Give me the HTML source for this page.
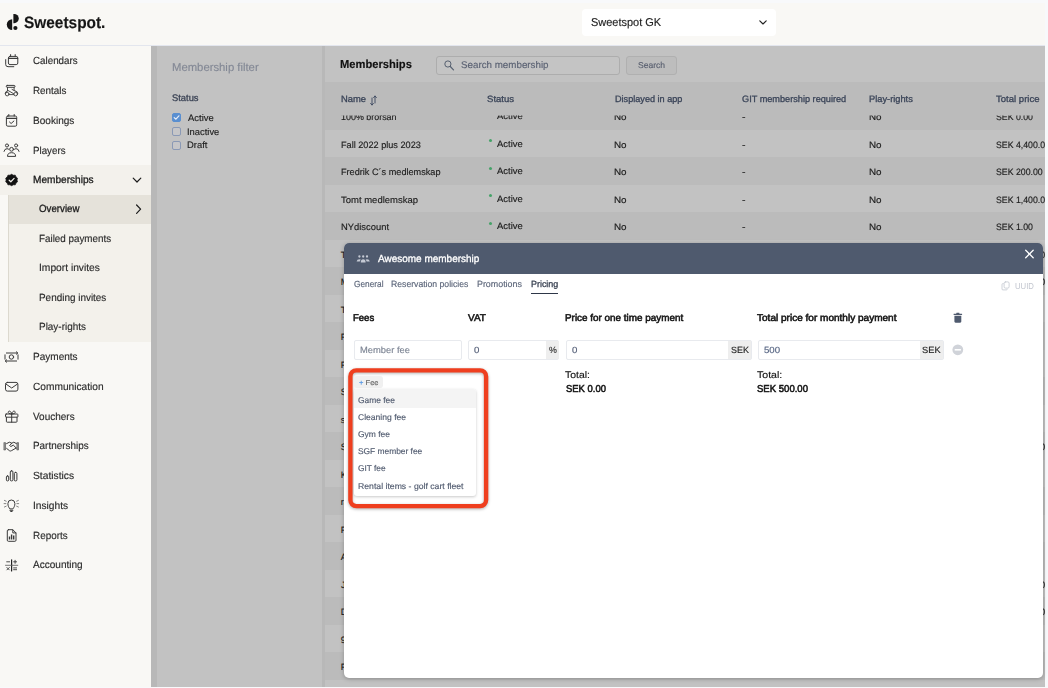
<!DOCTYPE html>
<html lang="en"><head><meta charset="utf-8"><title>Sweetspot - Memberships</title>
<style>
html,body{margin:0;padding:0;}
body{width:1048px;height:688px;overflow:hidden;position:relative;background:#f8f9fb;font-family:"Liberation Sans",sans-serif;}
.abs,.t{position:absolute;}
.t{white-space:pre;line-height:1;transform-origin:0 50%;text-rendering:geometricPrecision;-webkit-text-stroke:0.15px currentColor;}
#app{position:absolute;left:0;top:3px;width:1045px;height:684px;background:#f9f8f5;}
#root{position:absolute;left:0;top:0;width:1048px;height:688px;}
#rows{position:absolute;left:0;top:0;width:1048px;height:688px;clip-path:inset(115.5px 3px 1px 325px);}
.row{position:absolute;left:325px;width:720px;height:27.5px;}
.inp{position:absolute;box-sizing:border-box;border:1px solid #e8eaee;border-radius:2px;background:#fff;}
.addon{position:absolute;background:#eeeeee;}
.cb{position:absolute;width:9px;height:9px;box-sizing:border-box;border:1px solid #8a99b5;border-radius:2px;background:#c6c6c8;}
svg{position:absolute;overflow:visible;}
</style></head><body>
<div id="app"></div>
<div id="root">
<!-- header -->
<div class="abs" style="left:0;top:45px;width:1045px;height:1px;background:#e3e6ee"></div>
<div class="abs" style="left:582px;top:9px;width:194px;height:27px;background:#fff;border-radius:4px"></div>
<svg style="left:759.3px;top:20.2px" width="8" height="5" viewBox="0 0 8 5"><path d="M0.8 0.8 L4 4 L7.2 0.8" fill="none" stroke="#222" stroke-width="1.15" stroke-linecap="round" stroke-linejoin="round"/></svg>
<!-- logo -->
<svg style="left:5.9px;top:13.6px" width="11.6" height="16.2" viewBox="0 0 11.6 16.2"><path d="M6.2 5.2 A5.4 5.4 0 0 0 6.2 16 Z" fill="#161616"/><path d="M7.4 0 H8.2 A3.3 3.3 0 0 1 8.2 9.2 H7.4 Z" fill="#161616"/><circle cx="9.4" cy="14" r="2.1" fill="#161616"/></svg>
<!-- sidebar -->
<div class="abs" style="left:0;top:165px;width:151px;height:30px;background:#f3f1ec"></div>
<div class="abs" style="left:9px;top:195px;width:142px;height:147px;background:#f3f1eb"></div>
<div class="abs" style="left:9px;top:195px;width:142px;height:29px;background:#e5e2da"></div>
<div class="abs" style="left:8.3px;top:195px;width:1.2px;height:147px;background:#dcd9cf"></div>
<svg style="left:0;top:0" width="151" height="688" viewBox="0 0 151 688" fill="none" stroke="#3a3a3a" stroke-width="1" stroke-linecap="round" stroke-linejoin="round">
<!-- calendars -->
<rect x="8.4" y="56.4" width="9.4" height="8.2" rx="1.6"/><path d="M8.6 58.4 H17.6" stroke-width="1.3"/><path d="M10.6 54.6 V56.4 M15.2 54.6 V56.4"/><path d="M5.7 59.6 V64.4 Q5.7 66.7 8 66.7 H13.8"/>
<!-- rentals -->
<rect x="6.3" y="85.4" width="8.7" height="1.9" rx="0.9"/><path d="M7.5 87.3 V90.6 M14.1 87.3 V90.2 M8.1 90.5 L13.6 93.7 M12 89.4 L14.9 90.9 M9.2 94.6 H13.7 M5.1 93.2 Q5.6 91 7.7 90.8 M17.8 93.2 Q17.4 91.1 15.3 90.9" stroke-width="0.9"/><circle cx="7.2" cy="94.1" r="1.8" stroke-width="0.9"/><circle cx="15.7" cy="94.1" r="1.8" stroke-width="0.9"/>
<!-- bookings -->
<rect x="6.4" y="116" width="10.3" height="10.2" rx="1.4"/><path d="M6.6 118.4 H16.5" stroke-width="1.2"/><path d="M8.8 114.5 V116 M14.2 114.5 V116"/><path d="M9.5 122 L11.1 123.5 L13.9 121"/>
<!-- players -->
<circle cx="7" cy="145.5" r="1.55"/><circle cx="16.1" cy="145.5" r="1.55"/><circle cx="11.55" cy="149.3" r="1.9"/>
<path d="M4 151.4 Q4.5 148.7 7 148.7 Q8 148.7 8.6 149.2 M19.1 151.4 Q18.6 148.7 16.1 148.7 Q15.1 148.7 14.5 149.2 M7.5 156 Q7.5 152.7 11.55 152.7 Q15.6 152.7 15.6 156 Z"/>
<!-- memberships badge -->
<g transform="translate(11.6 180) scale(0.93) translate(-11.6 -180)"><path d="M11.6 173.9 L13.4 174.9 L15.5 174.8 L16.3 176.7 L17.9 178 L17.4 180 L17.9 182 L16.3 183.3 L15.5 185.2 L13.4 185.1 L11.6 186.1 L9.8 185.1 L7.7 185.2 L6.9 183.3 L5.3 182 L5.8 180 L5.3 178 L6.9 176.7 L7.7 174.8 L9.8 174.9 Z" fill="#111" stroke="#111" stroke-width="0.8"/>
<path d="M9 180.2 L10.8 181.9 L14.3 178.2" stroke="#f3f1ec" stroke-width="1.3"/></g>
<!-- chevrons -->
<path d="M133.2 178.2 L137 182 L140.8 178.2" stroke="#1b1b1b" stroke-width="1.2"/>
<path d="M136.6 205 L140.6 209.2 L136.6 213.4" stroke="#1b1b1b" stroke-width="1.2"/>
<!-- payments -->
<path d="M6.4 353 H17.4 M16.4 351.8 L17.8 353 L16.4 354.2 M18 354.8 V359.2 M16.6 361 H5.6 M6.6 359.8 L5.2 361 L6.6 362.2 M5 359.2 V354.8"/><circle cx="11.4" cy="357" r="2.2"/>
<!-- communication -->
<rect x="5.5" y="382.4" width="12.4" height="8.7" rx="1.9"/><path d="M5.9 384 L11.7 388 L17.5 384"/>
<!-- vouchers -->
<rect x="5.5" y="414" width="12.4" height="3.2" rx="0.7"/><path d="M6.4 417.2 V421.4 Q6.4 422.2 7.2 422.2 H16.2 Q17 422.2 17 421.4 V417.2 M11.7 414 V422.2"/>
<path d="M11.7 414 C9 414 7.8 412.9 8.3 411.8 C9 410.4 11 411 11.7 414 C12.4 411 14.4 410.4 15.1 411.8 C15.6 412.9 14.4 414 11.7 414"/>
<!-- partnerships -->
<rect x="4.2" y="442.6" width="1.3" height="7.4" fill="#777" stroke="#555" stroke-width="0.6"/><rect x="17.2" y="442.6" width="1.3" height="7.4" fill="#777" stroke="#555" stroke-width="0.6"/>
<path d="M6.6 443.6 L9.4 442.2 L11.8 443.2 L9.6 445.6 Q10.6 447 12 446 L13.2 445 L16.2 448 M6.6 448.4 L9.6 450.8 Q10.6 451.3 11.6 450.6 L16.2 448 M11.8 443.2 L13.8 442.2 L16.4 443.6"/>
<!-- statistics -->
<rect x="6.4" y="475.9" width="2.3" height="5" rx="1"/><rect x="10.3" y="470.8" width="2.6" height="10.1" rx="1.1"/><rect x="14.3" y="472.4" width="2.6" height="8.5" rx="1.1"/>
<!-- insights -->
<path d="M9.7 508.6 C8.8 507.4 7.9 505.9 7.9 503.6 A3.5 3.6 0 0 1 14.9 503.6 C14.9 505.9 14 507.4 13.1 508.6 Z M9.9 510.3 H12.9 M10.7 511.5 H12.1"/>
<path d="M4.4 500.4 L6.2 501.2 M4.1 503.6 H5.9 M4.4 507 L6.2 506.2 M18.4 500.4 L16.6 501.2 M18.7 503.6 H16.9 M18.4 507 L16.6 506.2" stroke-width="0.8" stroke="#666"/>
<!-- reports -->
<path d="M8.4 529.7 H12.8 L16 532.9 V540.2 Q16 541.3 14.9 541.3 H8.4 Q7.3 541.3 7.3 540.2 V530.8 Q7.3 529.7 8.4 529.7 Z M12.8 529.9 V532.9 H15.8"/>
<path d="M9.5 539.6 V536.6 M11.6 539.6 V534.4 M13.7 539.6 V535.6" stroke-width="1.4" stroke-linecap="butt"/>
<!-- accounting -->
<path d="M11.6 559.8 V571" stroke-width="1.2" stroke="#222"/><path d="M5.5 565.3 H17.8" stroke-width="0.9" stroke="#666"/>
<path d="M6.7 561.8 H9.6 M13.6 561.8 H16.6 M15.1 560.3 V563.3 M6.9 567.5 L9.3 569.9 M9.3 567.5 L6.9 569.9 M13.6 567.9 H16.6 M13.6 569.7 H16.6" stroke-width="0.9"/>
</svg>
<!-- gray area -->
<div class="abs" style="left:151px;top:46px;width:894px;height:641px;background:#b8b8b8"></div>
<div class="abs" style="left:157px;top:46px;width:165px;height:641px;background:#c2c2c2"></div>
<div class="abs" style="left:325px;top:46px;width:720px;height:641px;background:#c2c2c2"></div>
<div class="abs" style="left:325px;top:82px;width:720px;height:31px;background:#bbbbbb"></div>
<div class="row" style="top:102px;height:28px;background:#bbbbbb"></div>
<div class="row" style="top:157px;height:28px;background:#bbbbbb"></div>
<div class="row" style="top:212px;height:28px;background:#bbbbbb"></div>
<div class="row" style="top:267px;height:28px;background:#bbbbbb"></div>
<div class="row" style="top:322px;height:28px;background:#bbbbbb"></div>
<div class="row" style="top:377px;height:28px;background:#bbbbbb"></div>
<div class="row" style="top:432px;height:28px;background:#bbbbbb"></div>
<div class="row" style="top:487px;height:28px;background:#bbbbbb"></div>
<div class="row" style="top:542px;height:28px;background:#bbbbbb"></div>
<div class="row" style="top:597px;height:28px;background:#bbbbbb"></div>
<div class="row" style="top:652px;height:28px;background:#bbbbbb"></div>
<!-- filter -->
<div class="cb" style="left:172px;top:113px;background:#5a8fd0;border-color:#5a8fd0"></div>
<svg style="left:172px;top:113px" width="9" height="9" viewBox="0 0 9 9"><path d="M2.2 4.6 L3.9 6.2 L6.9 2.8" fill="none" stroke="#e8eef8" stroke-width="1.2" stroke-linecap="round" stroke-linejoin="round"/></svg>
<div class="cb" style="left:172px;top:126.7px"></div>
<div class="cb" style="left:172px;top:140.5px"></div>
<!-- search -->
<div class="abs" style="left:436px;top:56px;width:184px;height:18.5px;box-sizing:border-box;border:1px solid #adadad;border-radius:3px;background:#c4c4c4"></div>
<svg style="left:444px;top:60px" width="11" height="11" viewBox="0 0 11 11"><circle cx="3.9" cy="4" r="3.1" fill="none" stroke="#566070" stroke-width="1"/><path d="M6.3 6.5 L9.5 9.8" stroke="#566070" stroke-width="1.2" stroke-linecap="round"/></svg>
<div class="abs" style="left:626px;top:56px;width:51px;height:18.5px;box-sizing:border-box;border:1px solid #b0b0b0;border-radius:3px;background:#bdbdbd"></div>
<svg style="left:370px;top:95px" width="7" height="11" viewBox="0 0 7 11"><path d="M2 10 V3 M0.6 8.4 L2 10 L3.4 8.4 M5 1 V8 M3.6 2.6 L5 1 L6.4 2.6" fill="none" stroke="#3a465e" stroke-width="0.9" stroke-linecap="round" stroke-linejoin="round"/></svg>
<span class="t" style="left:33.29px;top:57.00px;font-size:10.4px;color:#2b2b2b;transform:scaleX(0.9424);">Calendars</span>
<span class="t" style="left:33.18px;top:87.00px;font-size:10.4px;color:#2b2b2b;transform:scaleX(0.9492);">Rentals</span>
<span class="t" style="left:33.18px;top:117.00px;font-size:10.4px;color:#2b2b2b;transform:scaleX(0.9671);">Bookings</span>
<span class="t" style="left:33.18px;top:147.00px;font-size:10.4px;color:#2b2b2b;transform:scaleX(0.9391);">Players</span>
<span class="t" style="left:33.18px;top:176.00px;font-size:10.4px;color:#1b1b1b;transform:scaleX(0.9722);-webkit-text-stroke:0.3px currentColor;">Memberships</span>
<span class="t" style="left:39.39px;top:205.00px;font-size:10.4px;color:#1b1b1b;transform:scaleX(0.9338);-webkit-text-stroke:0.3px currentColor;">Overview</span>
<span class="t" style="left:39.28px;top:235.00px;font-size:10.4px;color:#2b2b2b;transform:scaleX(0.9462);">Failed payments</span>
<span class="t" style="left:39.28px;top:264.00px;font-size:10.4px;color:#2b2b2b;transform:scaleX(0.9862);">Import invites</span>
<span class="t" style="left:39.28px;top:294.00px;font-size:10.4px;color:#2b2b2b;transform:scaleX(0.9554);">Pending invites</span>
<span class="t" style="left:39.28px;top:323.00px;font-size:10.4px;color:#2b2b2b;transform:scaleX(0.9562);">Play-rights</span>
<span class="t" style="left:33.18px;top:353.00px;font-size:10.4px;color:#2b2b2b;transform:scaleX(0.9663);">Payments</span>
<span class="t" style="left:33.29px;top:383.00px;font-size:10.4px;color:#2b2b2b;transform:scaleX(0.9786);">Communication</span>
<span class="t" style="left:33.29px;top:413.00px;font-size:10.4px;color:#2b2b2b;transform:scaleX(0.9611);">Vouchers</span>
<span class="t" style="left:33.18px;top:442.00px;font-size:10.4px;color:#2b2b2b;transform:scaleX(0.9537);">Partnerships</span>
<span class="t" style="left:33.29px;top:472.00px;font-size:10.4px;color:#2b2b2b;transform:scaleX(0.9896);">Statistics</span>
<span class="t" style="left:33.18px;top:502.00px;font-size:10.4px;color:#2b2b2b;transform:scaleX(0.9813);">Insights</span>
<span class="t" style="left:33.18px;top:532.00px;font-size:10.4px;color:#2b2b2b;transform:scaleX(0.9520);">Reports</span>
<span class="t" style="left:33.29px;top:561.00px;font-size:10.4px;color:#2b2b2b;transform:scaleX(0.9654);">Accounting</span>
<span class="t" style="left:23.91px;top:15.00px;font-size:16.4px;font-weight:700;color:#161616;transform:scaleX(0.9407);">Sweetspot.</span>
<span class="t" style="left:591.06px;top:18.00px;font-size:11.4px;color:#222;transform:scaleX(0.9621);">Sweetspot GK</span>
<span class="t" style="left:172.14px;top:63.00px;font-size:11.4px;color:#838895;transform:scaleX(0.9919);">Membership filter</span>
<span class="t" style="left:172.31px;top:94.00px;font-size:9.5px;color:#3a4254;transform:scaleX(0.9854);-webkit-text-stroke:0.3px currentColor;">Status</span>
<span class="t" style="left:187.52px;top:114.00px;font-size:9.3px;color:#1f1f1f;transform:scaleX(1.0156);">Active</span>
<span class="t" style="left:187.43px;top:128.00px;font-size:9.3px;color:#1f1f1f;transform:scaleX(1.0086);">Inactive</span>
<span class="t" style="left:187.43px;top:141.00px;font-size:9.3px;color:#1f1f1f;transform:scaleX(1.0132);">Draft</span>
<span class="t" style="left:340.44px;top:59.00px;font-size:11.6px;font-weight:700;color:#111;transform:scaleX(0.9616);">Memberships</span>
<span class="t" style="left:461.31px;top:61.00px;font-size:9.6px;color:#5c6374;transform:scaleX(1.0198);">Search membership</span>
<span class="t" style="left:637.75px;top:61.00px;font-size:8.5px;color:#5a6070;transform:scaleX(1.0036);">Search</span>
<span class="t" style="left:340.53px;top:95.00px;font-size:9.2px;color:#3a4458;transform:scaleX(1.0202);-webkit-text-stroke:0.3px currentColor;">Name</span>
<span class="t" style="left:487.22px;top:95.00px;font-size:9.2px;color:#3a4458;transform:scaleX(1.0409);-webkit-text-stroke:0.3px currentColor;">Status</span>
<span class="t" style="left:614.53px;top:95.00px;font-size:9.2px;color:#3a4458;transform:scaleX(0.9923);-webkit-text-stroke:0.3px currentColor;">Displayed in app</span>
<span class="t" style="left:741.52px;top:95.00px;font-size:9.2px;color:#3a4458;transform:scaleX(0.9971);-webkit-text-stroke:0.3px currentColor;">GIT membership required</span>
<span class="t" style="left:868.53px;top:95.00px;font-size:9.2px;color:#3a4458;transform:scaleX(1.0093);-webkit-text-stroke:0.3px currentColor;">Play-rights</span>
<span class="t" style="left:996.12px;top:95.00px;font-size:9.2px;color:#3a4458;transform:scaleX(1.0391);-webkit-text-stroke:0.3px currentColor;">Total price</span>
</div>
<div id="rows">
<div class="abs" style="left:489px;top:112px;width:3px;height:3px;border-radius:50%;background:#45a268"></div>
<div class="abs" style="left:489px;top:139px;width:3px;height:3px;border-radius:50%;background:#45a268"></div>
<div class="abs" style="left:489px;top:167px;width:3px;height:3px;border-radius:50%;background:#45a268"></div>
<div class="abs" style="left:489px;top:194px;width:3px;height:3px;border-radius:50%;background:#45a268"></div>
<div class="abs" style="left:489px;top:222px;width:3px;height:3px;border-radius:50%;background:#45a268"></div>
<div class="abs" style="left:489px;top:249px;width:3px;height:3px;border-radius:50%;background:#45a268"></div>
<div class="abs" style="left:489px;top:277px;width:3px;height:3px;border-radius:50%;background:#45a268"></div>
<div class="abs" style="left:489px;top:304px;width:3px;height:3px;border-radius:50%;background:#45a268"></div>
<div class="abs" style="left:489px;top:332px;width:3px;height:3px;border-radius:50%;background:#45a268"></div>
<div class="abs" style="left:489px;top:359px;width:3px;height:3px;border-radius:50%;background:#45a268"></div>
<div class="abs" style="left:489px;top:387px;width:3px;height:3px;border-radius:50%;background:#45a268"></div>
<div class="abs" style="left:489px;top:414px;width:3px;height:3px;border-radius:50%;background:#45a268"></div>
<div class="abs" style="left:489px;top:442px;width:3px;height:3px;border-radius:50%;background:#45a268"></div>
<div class="abs" style="left:489px;top:469px;width:3px;height:3px;border-radius:50%;background:#45a268"></div>
<div class="abs" style="left:489px;top:497px;width:3px;height:3px;border-radius:50%;background:#45a268"></div>
<div class="abs" style="left:489px;top:524px;width:3px;height:3px;border-radius:50%;background:#45a268"></div>
<div class="abs" style="left:489px;top:552px;width:3px;height:3px;border-radius:50%;background:#45a268"></div>
<div class="abs" style="left:489px;top:579px;width:3px;height:3px;border-radius:50%;background:#45a268"></div>
<div class="abs" style="left:489px;top:607px;width:3px;height:3px;border-radius:50%;background:#45a268"></div>
<div class="abs" style="left:489px;top:634px;width:3px;height:3px;border-radius:50%;background:#45a268"></div>
<div class="abs" style="left:489px;top:662px;width:3px;height:3px;border-radius:50%;background:#45a268"></div>
<span class="t" style="left:340.72px;top:113.00px;font-size:9.2px;color:#1c1c1c;transform:scaleX(0.9704);">100% brorsan</span>
<span class="t" style="left:496.62px;top:112.00px;font-size:9.2px;color:#1c1c1c;transform:scaleX(1.0272);">Active</span>
<span class="t" style="left:614.23px;top:113.00px;font-size:9.2px;color:#1c1c1c;transform:scaleX(1.0734);">No</span>
<span class="t" style="left:741.80px;top:113.00px;font-size:9.2px;color:#1c1c1c;transform:scaleX(1.1468);">-</span>
<span class="t" style="left:868.53px;top:113.00px;font-size:9.2px;color:#1c1c1c;transform:scaleX(1.0734);">No</span>
<span class="t" style="left:996.12px;top:113.00px;font-size:9.2px;color:#1c1c1c;transform:scaleX(0.952);">SEK 0.00</span>
<span class="t" style="left:340.63px;top:141.00px;font-size:9.2px;color:#1c1c1c;transform:scaleX(0.9951);">Fall 2022 plus 2023</span>
<span class="t" style="left:496.62px;top:140.00px;font-size:9.2px;color:#1c1c1c;transform:scaleX(1.0272);">Active</span>
<span class="t" style="left:614.23px;top:141.00px;font-size:9.2px;color:#1c1c1c;transform:scaleX(1.0734);">No</span>
<span class="t" style="left:741.80px;top:141.00px;font-size:9.2px;color:#1c1c1c;transform:scaleX(1.1468);">-</span>
<span class="t" style="left:868.53px;top:141.00px;font-size:9.2px;color:#1c1c1c;transform:scaleX(1.0734);">No</span>
<span class="t" style="left:996.12px;top:141.00px;font-size:9.2px;color:#1c1c1c;transform:scaleX(0.952);">SEK 4,400.00</span>
<span class="t" style="left:340.63px;top:168.00px;font-size:9.2px;color:#1c1c1c;transform:scaleX(0.9945);">Fredrik C´s medlemskap</span>
<span class="t" style="left:496.62px;top:167.00px;font-size:9.2px;color:#1c1c1c;transform:scaleX(1.0272);">Active</span>
<span class="t" style="left:614.23px;top:168.00px;font-size:9.2px;color:#1c1c1c;transform:scaleX(1.0734);">No</span>
<span class="t" style="left:741.80px;top:168.00px;font-size:9.2px;color:#1c1c1c;transform:scaleX(1.1468);">-</span>
<span class="t" style="left:868.53px;top:168.00px;font-size:9.2px;color:#1c1c1c;transform:scaleX(1.0734);">No</span>
<span class="t" style="left:996.12px;top:168.00px;font-size:9.2px;color:#1c1c1c;transform:scaleX(0.952);">SEK 200.00</span>
<span class="t" style="left:340.72px;top:196.00px;font-size:9.2px;color:#1c1c1c;transform:scaleX(1.0331);">Tomt medlemskap</span>
<span class="t" style="left:496.62px;top:195.00px;font-size:9.2px;color:#1c1c1c;transform:scaleX(1.0272);">Active</span>
<span class="t" style="left:614.23px;top:196.00px;font-size:9.2px;color:#1c1c1c;transform:scaleX(1.0734);">No</span>
<span class="t" style="left:741.80px;top:196.00px;font-size:9.2px;color:#1c1c1c;transform:scaleX(1.1468);">-</span>
<span class="t" style="left:868.53px;top:196.00px;font-size:9.2px;color:#1c1c1c;transform:scaleX(1.0734);">No</span>
<span class="t" style="left:996.12px;top:196.00px;font-size:9.2px;color:#1c1c1c;transform:scaleX(0.952);">SEK 1,400.00</span>
<span class="t" style="left:340.63px;top:223.00px;font-size:9.2px;color:#1c1c1c;transform:scaleX(1.0219);">NYdiscount</span>
<span class="t" style="left:496.62px;top:222.00px;font-size:9.2px;color:#1c1c1c;transform:scaleX(1.0272);">Active</span>
<span class="t" style="left:614.23px;top:223.00px;font-size:9.2px;color:#1c1c1c;transform:scaleX(1.0734);">No</span>
<span class="t" style="left:741.80px;top:223.00px;font-size:9.2px;color:#1c1c1c;transform:scaleX(1.1468);">-</span>
<span class="t" style="left:868.53px;top:223.00px;font-size:9.2px;color:#1c1c1c;transform:scaleX(1.0734);">No</span>
<span class="t" style="left:996.12px;top:223.00px;font-size:9.2px;color:#1c1c1c;transform:scaleX(0.952);">SEK 1.00</span>
<span class="t" style="left:340.72px;top:251.00px;font-size:9.2px;color:#1c1c1c;">Test membership</span>
<span class="t" style="left:496.62px;top:250.00px;font-size:9.2px;color:#1c1c1c;transform:scaleX(1.0272);">Active</span>
<span class="t" style="left:614.23px;top:251.00px;font-size:9.2px;color:#1c1c1c;transform:scaleX(1.0734);">No</span>
<span class="t" style="left:741.80px;top:251.00px;font-size:9.2px;color:#1c1c1c;transform:scaleX(1.1468);">-</span>
<span class="t" style="left:868.53px;top:251.00px;font-size:9.2px;color:#1c1c1c;transform:scaleX(1.0734);">No</span>
<span class="t" style="left:996.12px;top:251.00px;font-size:9.2px;color:#1c1c1c;transform:scaleX(0.952);">SEK 5,000.00</span>
<span class="t" style="left:340.63px;top:278.00px;font-size:9.2px;color:#1c1c1c;">Medlemskap 2023</span>
<span class="t" style="left:496.62px;top:277.00px;font-size:9.2px;color:#1c1c1c;transform:scaleX(1.0272);">Active</span>
<span class="t" style="left:614.23px;top:278.00px;font-size:9.2px;color:#1c1c1c;transform:scaleX(1.0734);">No</span>
<span class="t" style="left:741.80px;top:278.00px;font-size:9.2px;color:#1c1c1c;transform:scaleX(1.1468);">-</span>
<span class="t" style="left:868.53px;top:278.00px;font-size:9.2px;color:#1c1c1c;transform:scaleX(1.0734);">No</span>
<span class="t" style="left:996.12px;top:278.00px;font-size:9.2px;color:#1c1c1c;transform:scaleX(0.952);">SEK 2,500.00</span>
<span class="t" style="left:340.72px;top:306.00px;font-size:9.2px;color:#1c1c1c;">Test junior</span>
<span class="t" style="left:496.62px;top:305.00px;font-size:9.2px;color:#1c1c1c;transform:scaleX(1.0272);">Active</span>
<span class="t" style="left:614.23px;top:306.00px;font-size:9.2px;color:#1c1c1c;transform:scaleX(1.0734);">No</span>
<span class="t" style="left:741.80px;top:306.00px;font-size:9.2px;color:#1c1c1c;transform:scaleX(1.1468);">-</span>
<span class="t" style="left:868.53px;top:306.00px;font-size:9.2px;color:#1c1c1c;transform:scaleX(1.0734);">No</span>
<span class="t" style="left:996.12px;top:306.00px;font-size:9.2px;color:#1c1c1c;transform:scaleX(0.952);">SEK 0.00</span>
<span class="t" style="left:340.63px;top:333.00px;font-size:9.2px;color:#1c1c1c;">Fullvärdig medlem</span>
<span class="t" style="left:496.62px;top:332.00px;font-size:9.2px;color:#1c1c1c;transform:scaleX(1.0272);">Active</span>
<span class="t" style="left:614.23px;top:333.00px;font-size:9.2px;color:#1c1c1c;transform:scaleX(1.0734);">No</span>
<span class="t" style="left:741.80px;top:333.00px;font-size:9.2px;color:#1c1c1c;transform:scaleX(1.1468);">-</span>
<span class="t" style="left:868.53px;top:333.00px;font-size:9.2px;color:#1c1c1c;transform:scaleX(1.0734);">No</span>
<span class="t" style="left:996.12px;top:333.00px;font-size:9.2px;color:#1c1c1c;transform:scaleX(0.952);">SEK 650.00</span>
<span class="t" style="left:340.63px;top:361.00px;font-size:9.2px;color:#1c1c1c;">Familjemedlemskap</span>
<span class="t" style="left:496.62px;top:360.00px;font-size:9.2px;color:#1c1c1c;transform:scaleX(1.0272);">Active</span>
<span class="t" style="left:614.23px;top:361.00px;font-size:9.2px;color:#1c1c1c;transform:scaleX(1.0734);">No</span>
<span class="t" style="left:741.80px;top:361.00px;font-size:9.2px;color:#1c1c1c;transform:scaleX(1.1468);">-</span>
<span class="t" style="left:868.53px;top:361.00px;font-size:9.2px;color:#1c1c1c;transform:scaleX(1.0734);">No</span>
<span class="t" style="left:996.12px;top:361.00px;font-size:9.2px;color:#1c1c1c;transform:scaleX(0.952);">SEK 90.00</span>
<span class="t" style="left:340.72px;top:388.00px;font-size:9.2px;color:#1c1c1c;">Senior 2023</span>
<span class="t" style="left:496.62px;top:387.00px;font-size:9.2px;color:#1c1c1c;transform:scaleX(1.0272);">Active</span>
<span class="t" style="left:614.23px;top:388.00px;font-size:9.2px;color:#1c1c1c;transform:scaleX(1.0734);">No</span>
<span class="t" style="left:741.80px;top:388.00px;font-size:9.2px;color:#1c1c1c;transform:scaleX(1.1468);">-</span>
<span class="t" style="left:868.53px;top:388.00px;font-size:9.2px;color:#1c1c1c;transform:scaleX(1.0734);">No</span>
<span class="t" style="left:996.12px;top:388.00px;font-size:9.2px;color:#1c1c1c;transform:scaleX(0.952);">SEK 300.00</span>
<span class="t" style="left:340.72px;top:416.00px;font-size:9.2px;color:#1c1c1c;">student</span>
<span class="t" style="left:496.62px;top:415.00px;font-size:9.2px;color:#1c1c1c;transform:scaleX(1.0272);">Active</span>
<span class="t" style="left:614.23px;top:416.00px;font-size:9.2px;color:#1c1c1c;transform:scaleX(1.0734);">No</span>
<span class="t" style="left:741.80px;top:416.00px;font-size:9.2px;color:#1c1c1c;transform:scaleX(1.1468);">-</span>
<span class="t" style="left:868.53px;top:416.00px;font-size:9.2px;color:#1c1c1c;transform:scaleX(1.0734);">No</span>
<span class="t" style="left:996.12px;top:416.00px;font-size:9.2px;color:#1c1c1c;transform:scaleX(0.952);">SEK 150.00</span>
<span class="t" style="left:340.72px;top:443.00px;font-size:9.2px;color:#1c1c1c;">Sommarmedlem</span>
<span class="t" style="left:496.62px;top:442.00px;font-size:9.2px;color:#1c1c1c;transform:scaleX(1.0272);">Active</span>
<span class="t" style="left:614.23px;top:443.00px;font-size:9.2px;color:#1c1c1c;transform:scaleX(1.0734);">No</span>
<span class="t" style="left:741.80px;top:443.00px;font-size:9.2px;color:#1c1c1c;transform:scaleX(1.1468);">-</span>
<span class="t" style="left:868.53px;top:443.00px;font-size:9.2px;color:#1c1c1c;transform:scaleX(1.0734);">No</span>
<span class="t" style="left:996.12px;top:443.00px;font-size:9.2px;color:#1c1c1c;transform:scaleX(0.952);">SEK 2,000.00</span>
<span class="t" style="left:340.63px;top:471.00px;font-size:9.2px;color:#1c1c1c;">Kvällsmedlem</span>
<span class="t" style="left:496.62px;top:470.00px;font-size:9.2px;color:#1c1c1c;transform:scaleX(1.0272);">Active</span>
<span class="t" style="left:614.23px;top:471.00px;font-size:9.2px;color:#1c1c1c;transform:scaleX(1.0734);">No</span>
<span class="t" style="left:741.80px;top:471.00px;font-size:9.2px;color:#1c1c1c;transform:scaleX(1.1468);">-</span>
<span class="t" style="left:868.53px;top:471.00px;font-size:9.2px;color:#1c1c1c;transform:scaleX(1.0734);">No</span>
<span class="t" style="left:996.12px;top:471.00px;font-size:9.2px;color:#1c1c1c;transform:scaleX(0.952);">SEK 250.00</span>
<span class="t" style="left:340.63px;top:498.00px;font-size:9.2px;color:#1c1c1c;">range membership</span>
<span class="t" style="left:496.62px;top:497.00px;font-size:9.2px;color:#1c1c1c;transform:scaleX(1.0272);">Active</span>
<span class="t" style="left:614.23px;top:498.00px;font-size:9.2px;color:#1c1c1c;transform:scaleX(1.0734);">No</span>
<span class="t" style="left:741.80px;top:498.00px;font-size:9.2px;color:#1c1c1c;transform:scaleX(1.1468);">-</span>
<span class="t" style="left:868.53px;top:498.00px;font-size:9.2px;color:#1c1c1c;transform:scaleX(1.0734);">No</span>
<span class="t" style="left:996.12px;top:498.00px;font-size:9.2px;color:#1c1c1c;transform:scaleX(0.952);">SEK 900.00</span>
<span class="t" style="left:340.63px;top:526.00px;font-size:9.2px;color:#1c1c1c;">Företagsmedlem</span>
<span class="t" style="left:496.62px;top:525.00px;font-size:9.2px;color:#1c1c1c;transform:scaleX(1.0272);">Active</span>
<span class="t" style="left:614.23px;top:526.00px;font-size:9.2px;color:#1c1c1c;transform:scaleX(1.0734);">No</span>
<span class="t" style="left:741.80px;top:526.00px;font-size:9.2px;color:#1c1c1c;transform:scaleX(1.1468);">-</span>
<span class="t" style="left:868.53px;top:526.00px;font-size:9.2px;color:#1c1c1c;transform:scaleX(1.0734);">No</span>
<span class="t" style="left:996.12px;top:526.00px;font-size:9.2px;color:#1c1c1c;transform:scaleX(0.952);">SEK 100.00</span>
<span class="t" style="left:340.72px;top:553.00px;font-size:9.2px;color:#1c1c1c;">Autogiro test</span>
<span class="t" style="left:496.62px;top:552.00px;font-size:9.2px;color:#1c1c1c;transform:scaleX(1.0272);">Active</span>
<span class="t" style="left:614.23px;top:553.00px;font-size:9.2px;color:#1c1c1c;transform:scaleX(1.0734);">No</span>
<span class="t" style="left:741.80px;top:553.00px;font-size:9.2px;color:#1c1c1c;transform:scaleX(1.1468);">-</span>
<span class="t" style="left:868.53px;top:553.00px;font-size:9.2px;color:#1c1c1c;transform:scaleX(1.0734);">No</span>
<span class="t" style="left:996.12px;top:553.00px;font-size:9.2px;color:#1c1c1c;transform:scaleX(0.952);">SEK 10.00</span>
<span class="t" style="left:341.00px;top:581.00px;font-size:9.2px;color:#1c1c1c;">Junior 2024</span>
<span class="t" style="left:496.62px;top:580.00px;font-size:9.2px;color:#1c1c1c;transform:scaleX(1.0272);">Active</span>
<span class="t" style="left:614.23px;top:581.00px;font-size:9.2px;color:#1c1c1c;transform:scaleX(1.0734);">No</span>
<span class="t" style="left:741.80px;top:581.00px;font-size:9.2px;color:#1c1c1c;transform:scaleX(1.1468);">-</span>
<span class="t" style="left:868.53px;top:581.00px;font-size:9.2px;color:#1c1c1c;transform:scaleX(1.0734);">No</span>
<span class="t" style="left:996.12px;top:581.00px;font-size:9.2px;color:#1c1c1c;transform:scaleX(0.952);">SEK 1,200.00</span>
<span class="t" style="left:340.63px;top:608.00px;font-size:9.2px;color:#1c1c1c;">Distansmedlem</span>
<span class="t" style="left:496.62px;top:607.00px;font-size:9.2px;color:#1c1c1c;transform:scaleX(1.0272);">Active</span>
<span class="t" style="left:614.23px;top:608.00px;font-size:9.2px;color:#1c1c1c;transform:scaleX(1.0734);">No</span>
<span class="t" style="left:741.80px;top:608.00px;font-size:9.2px;color:#1c1c1c;transform:scaleX(1.1468);">-</span>
<span class="t" style="left:868.53px;top:608.00px;font-size:9.2px;color:#1c1c1c;transform:scaleX(1.0734);">No</span>
<span class="t" style="left:996.12px;top:608.00px;font-size:9.2px;color:#1c1c1c;transform:scaleX(0.952);">SEK 3,500.00</span>
<span class="t" style="left:340.72px;top:636.00px;font-size:9.2px;color:#1c1c1c;">9-hålsmedlem</span>
<span class="t" style="left:496.62px;top:635.00px;font-size:9.2px;color:#1c1c1c;transform:scaleX(1.0272);">Active</span>
<span class="t" style="left:614.23px;top:636.00px;font-size:9.2px;color:#1c1c1c;transform:scaleX(1.0734);">No</span>
<span class="t" style="left:741.80px;top:636.00px;font-size:9.2px;color:#1c1c1c;transform:scaleX(1.1468);">-</span>
<span class="t" style="left:868.53px;top:636.00px;font-size:9.2px;color:#1c1c1c;transform:scaleX(1.0734);">No</span>
<span class="t" style="left:996.12px;top:636.00px;font-size:9.2px;color:#1c1c1c;transform:scaleX(0.952);">SEK 350.00</span>
<span class="t" style="left:340.63px;top:663.00px;font-size:9.2px;color:#1c1c1c;">Fullt medlemskap</span>
<span class="t" style="left:496.62px;top:662.00px;font-size:9.2px;color:#1c1c1c;transform:scaleX(1.0272);">Active</span>
<span class="t" style="left:614.23px;top:663.00px;font-size:9.2px;color:#1c1c1c;transform:scaleX(1.0734);">No</span>
<span class="t" style="left:741.80px;top:663.00px;font-size:9.2px;color:#1c1c1c;transform:scaleX(1.1468);">-</span>
<span class="t" style="left:868.53px;top:663.00px;font-size:9.2px;color:#1c1c1c;transform:scaleX(1.0734);">No</span>
<span class="t" style="left:996.12px;top:663.00px;font-size:9.2px;color:#1c1c1c;transform:scaleX(0.952);">SEK 700.00</span>
</div>
<div id="root2" style="position:absolute;left:0;top:0;width:1048px;height:688px">
<!-- modal -->
<div class="abs" style="left:344px;top:243px;width:699px;height:435px;background:#fff;border-radius:5px;box-shadow:0 1px 4px rgba(0,0,0,.25)"></div>
<div class="abs" style="left:344px;top:243px;width:699px;height:31px;background:#4f5a6e;border-radius:5px 5px 0 0"></div>
<div class="abs" style="left:531px;top:292.8px;width:27px;height:1.5px;background:#2e3748"></div>
<!-- inputs -->
<div class="inp" style="left:353.7px;top:340px;width:108px;height:19.6px"></div>
<div class="inp" style="left:467.7px;top:340px;width:91.8px;height:19.6px"></div>
<div class="addon" style="left:546px;top:341px;width:12.5px;height:17.6px"></div>
<div class="inp" style="left:565.5px;top:340px;width:186.5px;height:19.6px"></div>
<div class="addon" style="left:727.8px;top:341px;width:23.2px;height:17.6px"></div>
<div class="inp" style="left:757.6px;top:340px;width:186.1px;height:19.6px"></div>
<div class="addon" style="left:919.5px;top:341px;width:23.2px;height:17.6px"></div>
<!-- red box -->
<svg style="left:0;top:0;filter:drop-shadow(0 1px 1.5px rgba(0,0,0,.3))" width="1048" height="688" viewBox="0 0 1048 688"><rect x="350.4" y="370.4" width="135.7" height="135.7" rx="6" fill="none" stroke="#ef3f1f" stroke-width="4.4"/></svg>
<div class="abs" style="left:354px;top:376.2px;width:29px;height:11.7px;background:#f0f0f0;border-radius:3px"></div>
<div class="abs" style="left:353.5px;top:389px;width:122.5px;height:107px;background:#fff;border-radius:3px;box-shadow:0 1px 3px rgba(0,0,0,.22)"></div>
<div class="abs" style="left:353.5px;top:389px;width:122.5px;height:19px;background:#f4f4f4;border-radius:3px 3px 0 0"></div>
<svg style="left:0;top:0" width="1048" height="688" viewBox="0 0 1048 688" fill="none" stroke-linecap="round" stroke-linejoin="round">
<g fill="#c5cad4" stroke="none"><circle cx="359.4" cy="256.5" r="1.15"/><circle cx="363.2" cy="256.5" r="1.15"/><circle cx="367" cy="256.5" r="1.15"/>
<path d="M360.8 262.6 Q360.8 259.3 363.2 259.3 Q365.6 259.3 365.6 262.6 Z"/>
<path d="M356.6 261.6 Q357 259.3 359.4 259.3 Q360.3 259.3 360.9 259.8 Q359.9 260.5 359.8 261.6 Z"/>
<path d="M369.8 261.6 Q369.4 259.3 367 259.3 Q366.1 259.3 365.5 259.8 Q366.5 260.5 366.6 261.6 Z"/></g>
<path d="M1025.7 250.3 L1033.2 257.7 M1033.2 250.3 L1025.7 257.7" stroke="#fff" stroke-width="1.3"/>
<rect x="1004.1" y="281.9" width="5" height="6.2" rx="1.3" stroke="#c2c6cf" stroke-width="0.8"/>
<path d="M1003.2 283.6 H1002.9 Q1002 283.6 1002 284.5 V289 Q1002 289.9 1002.9 289.9 H1006.4 Q1007.3 289.9 1007.3 289.2" stroke="#c2c6cf" stroke-width="0.8"/>
<g fill="#4f5a6e" stroke="none"><rect x="953.6" y="313.8" width="8.5" height="1.3" rx="0.3"/><rect x="956.3" y="312.8" width="3.1" height="1.4" rx="0.3"/>
<path d="M954.4 315.8 H961.3 V321.6 Q961.3 322.7 960.2 322.7 H955.5 Q954.4 322.7 954.4 321.6 Z"/></g>
<circle cx="957.8" cy="349.8" r="5.4" fill="#d0d3d9"/><rect x="954.7" y="349" width="6.2" height="1.6" fill="#fff"/>
</svg>
<span class="t" style="left:377.89px;top:255.00px;font-size:10.2px;color:#fff;transform:scaleX(0.9795);-webkit-text-stroke:0.3px currentColor;">Awesome membership</span>
<span class="t" style="left:353.53px;top:280.00px;font-size:9.0px;color:#5b6579;transform:scaleX(0.9207);">General</span>
<span class="t" style="left:391.44px;top:280.00px;font-size:9.0px;color:#5b6579;transform:scaleX(0.9608);">Reservation policies</span>
<span class="t" style="left:477.24px;top:280.00px;font-size:9.0px;color:#5b6579;transform:scaleX(0.9859);">Promotions</span>
<span class="t" style="left:530.74px;top:280.00px;font-size:9.0px;color:#2e3748;transform:scaleX(0.9918);-webkit-text-stroke:0.25px currentColor;">Pricing</span>
<span class="t" style="left:1014.66px;top:282.00px;font-size:8.6px;color:#c2c6cf;transform:scaleX(0.9015);-webkit-text-stroke:0;">UUID</span>
<span class="t" style="left:353.40px;top:314.00px;font-size:9.9px;color:#151515;transform:scaleX(0.9645);-webkit-text-stroke:0.55px currentColor;">Fees</span>
<span class="t" style="left:467.90px;top:314.00px;font-size:9.9px;color:#151515;transform:scaleX(1.0078);-webkit-text-stroke:0.55px currentColor;">VAT</span>
<span class="t" style="left:565.40px;top:314.00px;font-size:9.9px;color:#151515;transform:scaleX(1.0015);-webkit-text-stroke:0.55px currentColor;">Price for one time payment</span>
<span class="t" style="left:757.30px;top:314.00px;font-size:9.9px;color:#151515;transform:scaleX(1.0165);-webkit-text-stroke:0.55px currentColor;">Total price for monthly payment</span>
<span class="t" style="left:359.74px;top:346.00px;font-size:9.0px;color:#7d8594;transform:scaleX(1.0387);">Member fee</span>
<span class="t" style="left:474.43px;top:346.00px;font-size:9.0px;color:#566079;transform:scaleX(1.0746);">0</span>
<span class="t" style="left:548.73px;top:346.00px;font-size:9.0px;color:#333;transform:scaleX(0.9843);">%</span>
<span class="t" style="left:572.43px;top:346.00px;font-size:9.0px;color:#566079;transform:scaleX(1.0746);">0</span>
<span class="t" style="left:730.63px;top:346.00px;font-size:9.0px;color:#222;transform:scaleX(0.9930);">SEK</span>
<span class="t" style="left:764.03px;top:346.00px;font-size:9.0px;color:#566583;transform:scaleX(1.0704);">500</span>
<span class="t" style="left:922.33px;top:346.00px;font-size:9.0px;color:#222;transform:scaleX(1.0319);">SEK</span>
<span class="t" style="left:564.71px;top:371.00px;font-size:9.7px;color:#151515;transform:scaleX(1.0782);">Total:</span>
<span class="t" style="left:565.50px;top:385.00px;font-size:10.0px;color:#151515;transform:scaleX(0.9440);-webkit-text-stroke:0.55px currentColor;">SEK 0.00</span>
<span class="t" style="left:756.51px;top:371.00px;font-size:9.7px;color:#151515;transform:scaleX(1.0912);">Total:</span>
<span class="t" style="left:757.30px;top:385.00px;font-size:10.0px;color:#151515;transform:scaleX(0.9555);-webkit-text-stroke:0.55px currentColor;">SEK 500.00</span>
<span class="t" style="left:358.79px;top:380.00px;font-size:7.1px;color:#666;transform:scaleX(1.0665);"><span style="color:#4a90e2">+</span> Fee</span>
<span class="t" style="left:357.85px;top:396.00px;font-size:8.4px;color:#525c70;transform:scaleX(1.0012);">Game fee</span>
<span class="t" style="left:357.85px;top:413.00px;font-size:8.4px;color:#525c70;transform:scaleX(1.0211);">Cleaning fee</span>
<span class="t" style="left:357.85px;top:430.00px;font-size:8.4px;color:#525c70;transform:scaleX(1.0116);">Gym fee</span>
<span class="t" style="left:357.85px;top:447.00px;font-size:8.4px;color:#525c70;transform:scaleX(0.9998);">SGF member fee</span>
<span class="t" style="left:357.85px;top:464.00px;font-size:8.4px;color:#525c70;transform:scaleX(0.9943);">GIT fee</span>
<span class="t" style="left:357.76px;top:482.00px;font-size:8.4px;color:#525c70;transform:scaleX(1.0352);">Rental items - golf cart fleet</span>
</div>
</body></html>
